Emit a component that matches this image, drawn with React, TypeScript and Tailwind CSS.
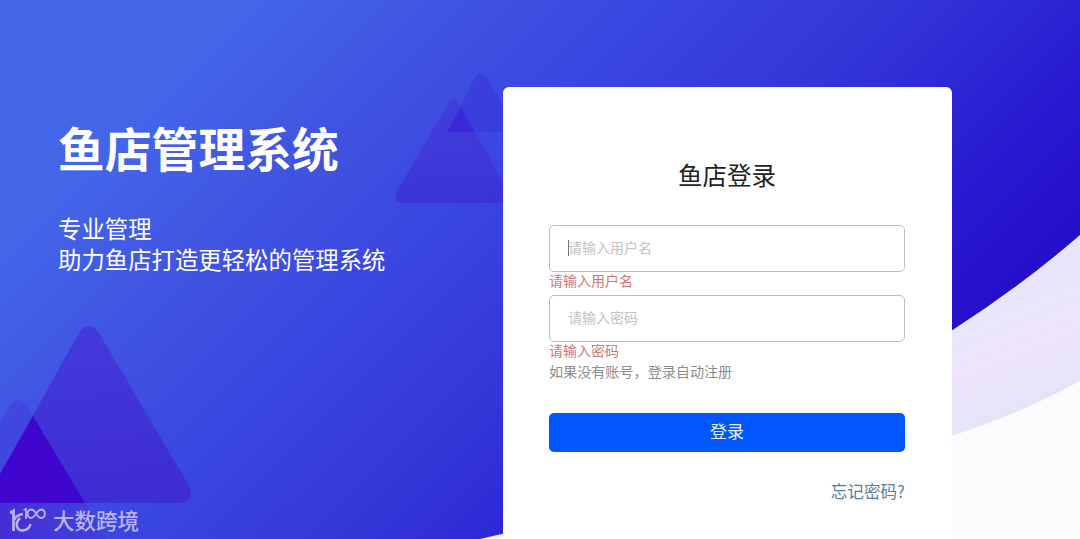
import React, { useState } from 'react';

function Background() {
  return (
    <svg className="absolute inset-0 h-full w-full" viewBox="0 0 1080 539" preserveAspectRatio="none">
      <defs>
        <linearGradient id="sky" gradientUnits="userSpaceOnUse" x1="125" y1="125" x2="650" y2="650">
          <stop offset="0" stopColor="#4366e9" />
          <stop offset="0.2" stopColor="#4054e1" />
          <stop offset="0.43" stopColor="#3843e0" />
          <stop offset="0.56" stopColor="#363ad7" />
          <stop offset="0.7" stopColor="#2f2ed6" />
          <stop offset="0.86" stopColor="#281ad0" />
          <stop offset="1" stopColor="#2410c9" />
        </linearGradient>
        <linearGradient id="band" gradientUnits="userSpaceOnUse" x1="980" y1="320" x2="1020" y2="420">
          <stop offset="0" stopColor="#e9e6fb" />
          <stop offset="0.4" stopColor="#eee4fb" />
          <stop offset="1" stopColor="#e2e5f8" />
        </linearGradient>
        <linearGradient id="peak" x1="0" y1="0" x2="0" y2="1">
          <stop offset="0" stopColor="#4337dd" />
          <stop offset="1" stopColor="#3d29cf" />
        </linearGradient>
        <linearGradient id="shade" x1="0" y1="0" x2="1" y2="0">
          <stop offset="0" stopColor="#4527d4" stopOpacity="0.85" />
          <stop offset="1" stopColor="#4535d9" stopOpacity="0.5" />
        </linearGradient>
      </defs>
      <rect width="1080" height="539" fill="#fcfbfe" />
      <path d="M480 539C700 510 860 475 951 436Q1020 414 1080 381V234H480Z" fill="url(#band)" />
      <path d="M0 0H1080V235Q1020 287 951 331C800 425 640 505 480 539H0Z" fill="url(#sky)" />

      {/* bottom left peaks */}
      <path d="M0 503H85L106 539H0Z" fill="url(#shade)" />
      <path d="M0 423L10 405Q18 395 27 405L33 416L85 503H0Z" fill="#4043de" opacity="0.75" />
      <path d="M0 474L79 333Q89 318 99 333L188 484Q196 500 181 503H0Z" fill="url(#peak)" opacity="0.9" />
      <path d="M0 474L33 416L85 503H0Z" fill="#3e06cf" />

      {/* peaks beside the card */}
      <path d="M447 132L475 78Q481 69 487 78L520 132Z" fill="#3a37dc" opacity="0.65" />
      <path d="M396 193L448 104Q454 95 460 104L514 203H401Q394 202 396 193Z" fill="url(#peak)" opacity="0.65" />
      <path d="M447 132L461 107L475 132Z" fill="#3d22d9" opacity="0.75" />
    </svg>
  );
}

function Watermark() {
  return (
    <div className="absolute bottom-[5px] left-[9px] flex items-center gap-1.5 text-[#b9b1f3]">
      <svg width="38" height="28" viewBox="0 0 38 28" fill="none" stroke="currentColor">
        <path d="M1 7L4.5 5V25" strokeWidth="2.8" />
        <path d="M5 14Q7 9 14 8M11 12C5 18 8 24.500 13.500 24.500Q20 24 21.500 18" strokeWidth="2.600" />
        <path d="M14.500 4L17 3V13" strokeWidth="1.8" />
        <path d="M27.500 8C25.500 4.500 24 3.500 22 3.500A4 4.300 0 0 0 22 12C26 12 28 3.500 32.500 3.500A4 4.300 0 0 1 32.500 12C30 12 28.500 10 27.500 8Z" strokeWidth="1.8" />
      </svg>
      <span className="text-[21.5px] leading-7 font-medium">大数跨境</span>
    </div>
  );
}

export default function App() {
  const [form, setForm] = useState({ username: "", password: "" });

  const handleInputChange = (e: React.ChangeEvent<HTMLInputElement>) => {
    setForm({ ...form, [e.target.name]: e.target.value });
  };

  return (
    <div className="relative h-[539px] w-full overflow-hidden font-['Noto_Sans_CJK_SC',sans-serif]">
      <Background />

      <div className="relative flex items-start">
        {/* Intro */}
        <div className="w-[503px] shrink-0 pt-[112px] pl-[58px] text-white">
          <h1 className="text-[46.8px] leading-[70px] font-bold">鱼店管理系统</h1>
          <p className="mt-[31px] text-[23.4px] leading-[31px]">
            专业管理
            <br />
            助力鱼店打造更轻松的管理系统
          </p>
        </div>

        {/* Login card */}
        <div className="mt-[87px] h-[470px] w-[449px] rounded-md bg-white pt-[70px] pr-[47px] pl-[46px]">
          <h2 className="text-center text-[24.5px] leading-9 text-[#222]">鱼店登录</h2>

          <div className="relative mt-8">
            <input
              type="text"
              name="username"
              placeholder="请输入用户名"
              value={form.username}
              onChange={handleInputChange}
              className="block h-[47px] w-full rounded-[5px] border border-[#c5b9b9] px-[18px] pb-[3px] text-sm outline-none placeholder:text-[#c3c3c3]"
            />
            {/* caret */}
            <span className="absolute top-[15px] left-[19px] h-4 w-px bg-[#777]" />
          </div>
          <p className="h-[23px] text-sm leading-[17px] text-[#cf7777]">请输入用户名</p>

          <input
            type="password"
            name="password"
            placeholder="请输入密码"
            value={form.password}
            onChange={handleInputChange}
            className="block h-[47px] w-full rounded-[5px] border border-[#c5b9b9] px-[18px] pb-[3px] text-sm outline-none placeholder:text-[#c3c3c3]"
          />
          <p className="text-sm leading-[17px] text-[#cf7777]">请输入密码</p>
          <p className="mt-[3px] text-[14.1px] leading-[18px] text-[#8c8c8c]">如果没有账号，登录自动注册</p>

          <button className="mt-[33px] block h-[39px] w-full rounded-[5px] bg-[#0256fe] pb-[3px] text-[17px] leading-[36px] text-[#e4f0ff]">
            登录
          </button>

          <div className="mt-[27px] text-right">
            <a href="#" className="text-[16.6px] leading-6 text-[#5a7c9c]">忘记密码?</a>
          </div>
        </div>
      </div>

      <Watermark />
    </div>
  );
}
